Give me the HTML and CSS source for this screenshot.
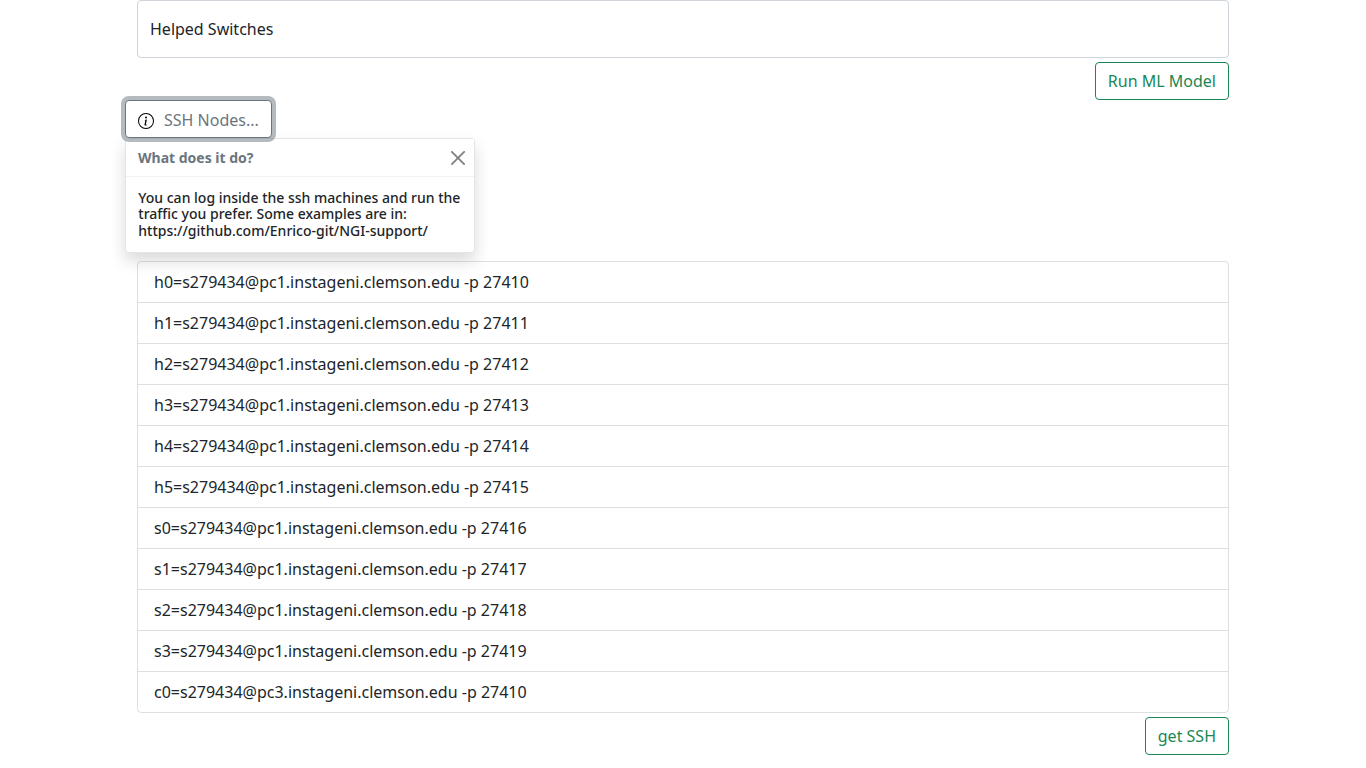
FILE: index.html
```html
<!DOCTYPE html>
<html lang="en">
<head>
<meta charset="utf-8">
<title>SSH Nodes</title>
<link rel="stylesheet" href="styles.css">
</head>
<body>
<main class="container">
  <div class="panel">Helped Switches</div>
  <div class="actions"><button class="btn btn-success">Run ML Model</button></div>
  <section class="ssh-info">
    <button class="btn btn-info">
      <svg class="info-icon" viewBox="0 0 16 16" fill="#000"><path d="M8 15A7 7 0 1 1 8 1a7 7 0 0 1 0 14zm0 1A8 8 0 1 0 8 0a8 8 0 0 0 0 16z"/><path d="m8.930 6.588-2.290.287-.082.380.450.083c.294.070.352.176.288.469l-.738 3.468c-.194.897.105 1.319.808 1.319.545 0 1.178-.252 1.465-.598l.088-.416c-.200.176-.492.246-.686.246-.275 0-.375-.193-.304-.533L8.930 6.588zM9 4.500a1 1 0 1 1-2 0 1 1 0 0 1 2 0z"/></svg>
      <span>SSH Nodes...</span>
    </button>
    <div class="toast">
      <div class="toast-header"><strong>What does it do?</strong>
        <svg class="close" viewBox="0 0 16 16"><path d="M.293.293a1 1 0 011.414 0L8 6.586 14.293.293a1 1 0 111.414 1.414L9.414 8l6.293 6.293a1 1 0 01-1.414 1.414L8 9.414l-6.293 6.293a1 1 0 01-1.414-1.414L6.586 8 .293 1.707a1 1 0 010-1.414z"/></svg>
      </div>
      <div class="toast-body">You can log inside the ssh machines and run the traffic you prefer. Some examples are in: https://github.com/Enrico-git/NGI-support/</div>
    </div>
  </section>
  <ul class="list">
    <li>h0=s279434@pc1.instageni.clemson.edu -p 27410</li>
    <li>h1=s279434@pc1.instageni.clemson.edu -p 27411</li>
    <li>h2=s279434@pc1.instageni.clemson.edu -p 27412</li>
    <li>h3=s279434@pc1.instageni.clemson.edu -p 27413</li>
    <li>h4=s279434@pc1.instageni.clemson.edu -p 27414</li>
    <li>h5=s279434@pc1.instageni.clemson.edu -p 27415</li>
    <li>s0=s279434@pc1.instageni.clemson.edu -p 27416</li>
    <li>s1=s279434@pc1.instageni.clemson.edu -p 27417</li>
    <li>s2=s279434@pc1.instageni.clemson.edu -p 27418</li>
    <li>s3=s279434@pc1.instageni.clemson.edu -p 27419</li>
    <li>c0=s279434@pc3.instageni.clemson.edu -p 27410</li>
  </ul>
  <div class="actions"><button class="btn btn-success">get SSH</button></div>
</main>
</body>
</html>
```
FILE: styles.css
```css
* { box-sizing: border-box; }
body {
  margin: 0;
  font: 400 16px/24px "Noto Sans", "Liberation Sans", sans-serif;
  color: #212529;
  background: #fff;
  overflow: hidden;
}
.container { width: 1116px; margin: 0 auto; padding: 0 12px; }
.panel {
  height: 58px;
  padding: 16px 12px;
  border: 1px solid #ced4da;
  border-radius: 4px;
}
.actions { display: flex; justify-content: flex-end; padding-top: 4px; }
.btn {
  display: flex;
  align-items: center;
  height: 38px;
  padding: 6px 12px;
  border: 1px solid;
  border-radius: 4px;
  background: #fff;
  font: inherit;
  white-space: nowrap;
}
.btn-success { color: #198754; border-color: #198754; }
.ssh-info { height: 161px; margin-left: -12px; }
.btn-info {
  position: relative;
  z-index: 1;
  gap: 10px;
  padding: 7px 12px 5px;
  color: #6c757d;
  border-color: #6c757d;
  box-shadow: 0 0 0 4px rgba(108, 117, 125, .5);
}
.info-icon { width: 16px; height: 16px; margin-top: 2px; }
.toast {
  position: relative;
  width: 350px;
  height: 115px;
  border: 1px solid rgba(0, 0, 0, .1);
  border-radius: 4px;
  background: rgba(255, 255, 255, .85);
  background-clip: padding-box;
  box-shadow: 0 8px 16px rgba(0, 0, 0, .15);
  font-size: 14px;
}
.toast-header {
  display: flex;
  align-items: center;
  justify-content: space-between;
  height: 38px;
  padding: 0 9px 0 12px;
  border-bottom: 1px solid rgba(0, 0, 0, .05);
  background: rgba(255, 255, 255, .85);
  color: #6c757d;
}
.close { width: 14px; height: 14px; opacity: .5; }
.toast-body {
  padding: 12.6px 12px 12px 12.3px;
  font-weight: 500;
  line-height: 16.8px;
}
.list {
  margin: 0;
  padding: 0;
  list-style: none;
  border: 1px solid rgba(0, 0, 0, .125);
  border-radius: 4px;
}
.list li { padding: 8px 16px; }
.list li + li { border-top: 1px solid rgba(0, 0, 0, .125); }
```
